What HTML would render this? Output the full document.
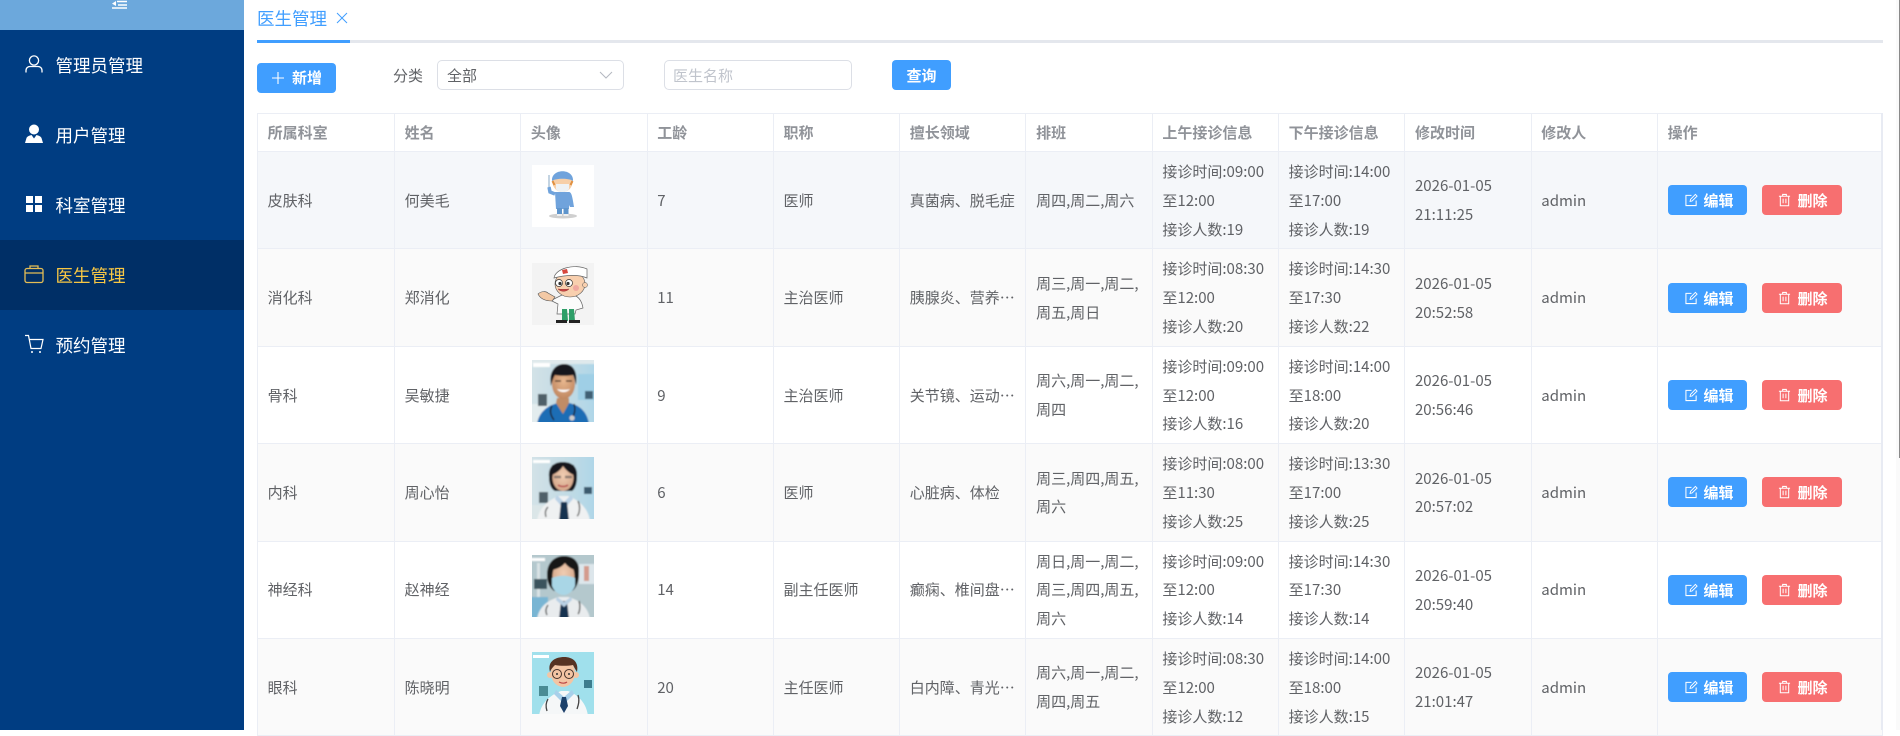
<!DOCTYPE html>
<html lang="zh"><head><meta charset="utf-8"><title>医生管理</title>
<style>
*{box-sizing:border-box}
html,body{margin:0;padding:0;width:1900px;height:730px;overflow:hidden;background:#fff;font-family:"Noto Sans CJK SC","Liberation Sans",sans-serif;color:#606266;font-size:15px}
.abs{position:absolute}
#side{position:absolute;left:0;top:0;width:244px;height:730px;background:#003d82}
#side .top{height:30px;background:#6ca8dc;position:relative}
.mi{position:absolute;left:0;width:244px;height:70px;line-height:72px;color:#fff;font-size:17.5px;padding-left:55.5px}
.mi svg{position:absolute;left:24px;top:24px}
.mi.on{background:#002f66;color:#f7c744}
#tab{position:absolute;left:257px;top:6px;font-size:17.5px;line-height:26px;color:#409eff}
#line{position:absolute;left:257px;top:40px;width:1626px;height:3px;background:#e4e7ed}
#line i{position:absolute;left:0;top:0;width:93px;height:3px;background:#409eff}
.btn{position:absolute;border-radius:4px;color:#fff;background:#409eff;text-align:center;font-weight:700;font-size:15px;line-height:30px;height:30px}
.box{position:absolute;top:60px;height:30px;border:1px solid #dcdfe6;border-radius:5px;background:#fff;line-height:30px;font-size:15px}
table{position:absolute;left:257px;top:113px;width:1625px;table-layout:fixed;border-collapse:collapse;border-top:1px solid #ebeef5;border-left:1px solid #ebeef5;background:#fff}
#rb{position:absolute;left:1881px;top:113px;width:2px;height:617px;background:#e8ebf3}
th,td{border:1px solid #ebeef5;padding:0 10px 0 9.6px;text-align:left;font-size:15px;overflow:hidden;border-top:0;border-left-color:#ebeef5}
th{height:38px;color:#909399;font-weight:700;background:#fff;line-height:20px}
td{height:97.4px;line-height:28.8px;padding-top:2px;padding-bottom:0}
tr.h td{background:#f5f7fa}
tr.s td{background:#fafafa}
tr.w td{background:#fff}
td.el{white-space:nowrap;text-overflow:ellipsis}
td svg.av{display:block;width:62px;height:62px;position:relative;top:-5px;left:1px}
.op{position:relative;padding:0}
.b{position:absolute;top:50%;margin-top:-15px;height:30px;border-radius:4px;color:#fff;font-weight:700;font-size:15px;line-height:30px}
.b svg{position:absolute;top:8px}
.b span{position:absolute;top:1px}
.e{left:10.5px;width:79px;background:#409eff}
.d{left:104.5px;width:80px;background:#f76f70}
</style></head><body>
<svg width="0" height="0" style="position:absolute"><defs>
<linearGradient id="g1" x1="0" y1="0" x2="1" y2="0"><stop offset="0" stop-color="#d3e2e7"/><stop offset=".55" stop-color="#c2dbe4"/><stop offset="1" stop-color="#aed6e8"/></linearGradient>
<radialGradient id="fc" cx=".5" cy=".4" r=".7"><stop offset="0" stop-color="#e8b78f"/><stop offset="1" stop-color="#b97f58"/></radialGradient>
<radialGradient id="ff" cx=".5" cy=".4" r=".7"><stop offset="0" stop-color="#f0cdb2"/><stop offset="1" stop-color="#cf9f82"/></radialGradient>
<filter id="bl" x="-5%" y="-5%" width="110%" height="110%"><feGaussianBlur stdDeviation=".7"/></filter>
<filter id="bs" x="-5%" y="-5%" width="110%" height="110%"><feGaussianBlur stdDeviation=".35"/></filter>
<symbol id="ed" viewBox="0 0 14 14"><path d="M12 7.5V13H1V2h6" fill="none" stroke="#fff" stroke-width="1.1"/><path d="M5.5 8.5l.5-2.2L11.2 1l1.8 1.8L7.700 8z" fill="none" stroke="#fff" stroke-width="1"/></symbol>
<symbol id="tr" viewBox="0 0 14 14"><path d="M1 3h12M5 3V1h4v2M2.500 3v10.200h9V3M5.500 5.500v5M8.500 5.500v5" fill="none" stroke="#fff" stroke-width="1.100"/></symbol>
</defs></svg>

<div id="side">
<div class="top"><svg class="abs" style="left:112px;top:0" width="16" height="10" viewBox="0 0 16 10"><path d="M5 1.500h10M6 5h9M0 8h15" stroke="#fff" stroke-width="1.600" fill="none"/><path d="M0 3.600L4 1v5z" fill="#fff"/></svg></div>
<div class="mi" style="top:30px"><svg width="20" height="20" viewBox="0 0 20 20"><circle cx="10" cy="6.500" r="4.600" fill="none" stroke="#fff" stroke-width="1.300"/><path d="M2 18.500v-2c0-2.600 2-4 4-4h8c2 0 4 1.400 4 4v2" fill="none" stroke="#fff" stroke-width="1.300"/></svg>管理员管理</div>
<div class="mi" style="top:100px"><svg width="20" height="20" viewBox="0 0 20 20"><circle cx="10" cy="5.500" r="5" fill="#fff"/><path d="M1 19l1.500-5c.5-1.500 3-2.500 5-3l2.500 3.500 2.500-3.500c2 .5 4.500 1.500 5 3l1.500 5z" fill="#fff"/></svg>用户管理</div>
<div class="mi" style="top:170px"><svg width="20" height="20" viewBox="0 0 20 20"><path d="M2 2h7v7H2zM11 2h7v7h-7zM2 11h7v7H2zM11 11h7v7h-7z" fill="#fff"/></svg>科室管理</div>
<div class="mi on" style="top:240px"><svg width="20" height="20" viewBox="0 0 20 20"><rect x="1" y="4.500" width="18" height="14" rx="2" fill="none" stroke="#e4bd55" stroke-width="1.300"/><path d="M6 4.500V2h8v2.500M1 9h18" fill="none" stroke="#e4bd55" stroke-width="1.300"/></svg>医生管理</div>
<div class="mi" style="top:310px"><svg width="20" height="20" viewBox="0 0 20 20"><path d="M1 1.500h3.500L7 14.500h10L19 5.500H5" fill="none" stroke="#fff" stroke-width="1.200"/><circle cx="8" cy="18" r="1" fill="#fff"/><circle cx="16" cy="18" r="1" fill="#fff"/></svg>预约管理</div>
</div>

<div id="tab">医生管理</div>
<svg class="abs" style="left:336px;top:12px" width="12" height="12" viewBox="0 0 12 12"><path d="M1 1l10 10M11 1L1 11" stroke="#409eff" stroke-width="1"/></svg>
<div id="line"><i></i></div>

<div class="btn" style="left:257px;top:63px;width:79px;text-align:left;padding-left:35px">新增</div>
<svg class="abs" style="left:272px;top:72px" width="12" height="12" viewBox="0 0 12 12"><path d="M6 0v12M0 6h12" stroke="#fff" stroke-width="1.100"/></svg>
<div class="abs" style="left:393px;top:64px;line-height:24px;font-size:15px">分类</div>
<div class="box" style="left:437px;width:187px;padding-left:9px">全部</div>
<svg class="abs" style="left:599px;top:71px" width="14" height="8" viewBox="0 0 14 8"><path d="M1 1l6 6 6-6" stroke="#b4b8c0" stroke-width="1" fill="none"/></svg>
<div class="box" style="left:664px;width:188px;padding-left:8px;color:#c0c4cc">医生名称</div>
<div class="btn" style="left:892px;top:60px;width:59px;line-height:32px">查询</div>

<table>
<colgroup><col style="width:137px"><col style="width:126.3px"><col style="width:126.3px"><col style="width:126.3px"><col style="width:126.3px"><col style="width:126.3px"><col style="width:126.3px"><col style="width:126.3px"><col style="width:126.3px"><col style="width:126.3px"><col style="width:126.3px"><col style="width:225px"></colgroup>
<tr><th>所属科室</th><th>姓名</th><th>头像</th><th>工龄</th><th>职称</th><th>擅长领域</th><th>排班</th><th>上午接诊信息</th><th>下午接诊信息</th><th>修改时间</th><th>修改人</th><th>操作</th></tr>

<tr class="h"><td>皮肤科</td><td>何美毛</td><td><svg class="av" viewBox="0 0 62 62"><rect width="62" height="62" fill="#fff"/><g filter="url(#bs)"><ellipse cx="31" cy="51" rx="14" ry="2.500" fill="#cfcfcf"/><path d="M17 10v12" stroke="#9db8cf" stroke-width="1.200"/><path d="M23 29l-5-2-1-5" stroke="#6fa3dc" stroke-width="3.500" fill="none"/><path d="M23 27h14c2 0 3 3 4 9l1 6-4 0-1-2 0 4H24z" fill="#6fa3dc"/><path d="M25 43h5v6h-5zM31.500 43h5v6h-5z" fill="#5e95cc"/><path d="M25 49h5v2h-5zM31.500 49h5v2h-5z" fill="#eee"/><circle cx="30.500" cy="17" r="10" fill="#f7cfa8"/><path d="M20 16C19 3 42 3 41 16c-3-3-18-3-21 0z" fill="#6fa3dc"/><path d="M20.500 16l2 4M40.500 16l-2 4" stroke="#e08f3f" stroke-width="2"/><path d="M24 19h13v5c-3 4-10 4-13 0z" fill="#eef2f5"/></g></svg></td><td>7</td><td>医师</td><td class="el">真菌病、脱毛症</td><td>周四,周二,周六</td><td>接诊时间:09:00<br>至12:00<br>接诊人数:19</td><td>接诊时间:14:00<br>至17:00<br>接诊人数:19</td><td>2026-01-05<br>21:11:25</td><td>admin</td><td class="op"><div class="b e"><svg style="left:17px" width="13" height="14"><use href="#ed"/></svg><span style="left:35px">编辑</span></div><div class="b d"><svg style="left:16px" width="13" height="14"><use href="#tr"/></svg><span style="left:35px">删除</span></div></td></tr>

<tr class="s"><td>消化科</td><td>郑消化</td><td><svg class="av" viewBox="0 0 62 62"><rect width="62" height="62" fill="#f3f3f3"/><g filter="url(#bs)"><path d="M6 31c3-3 8-3 10-1l7 4-3 4c-5 0-11-1-14-7z" fill="#f3c9a5" stroke="#555" stroke-width=".6"/><path d="M22 36l8-4h12c5 2 8 7 9 13l-7 2-1 4H25l1-10-6-3z" fill="#fbfbfb" stroke="#666" stroke-width=".7"/><path d="M30 46h5l1 12h-6zM37 46h5l1 12h-6z" fill="#2f9f68"/><path d="M24 57h11v3H24zM37 57h11v3H37z" fill="#222"/><ellipse cx="38" cy="21" rx="15" ry="13" fill="#f8cfae" stroke="#555" stroke-width=".6"/><circle cx="53" cy="22" r="2.500" fill="#f8cfae" stroke="#555" stroke-width=".5"/><path d="M22 15C23 6 42 0 55 6l0 9c-9-4-22-3-33 0z" fill="#fff" stroke="#666" stroke-width=".7"/><path d="M30 7l5-1 1 4-5 1z" fill="#d7463e"/><circle cx="27" cy="20" r="3.500" fill="#fff" stroke="#333" stroke-width=".7"/><circle cx="37" cy="20" r="3.500" fill="#fff" stroke="#333" stroke-width=".7"/><circle cx="28" cy="20.500" r="1.600" fill="#333"/><circle cx="36" cy="20.500" r="1.600" fill="#333"/><circle cx="44" cy="25" r="3" fill="#f0a9a0"/><path d="M26 26c3 3 8 3 11 0-3 .5-8 .5-11 0z" fill="#c44" stroke="#933" stroke-width=".5"/></g></svg></td><td>11</td><td>主治医师</td><td class="el">胰腺炎、营养不良、胃肠病</td><td>周三,周一,周二,<br>周五,周日</td><td>接诊时间:08:30<br>至12:00<br>接诊人数:20</td><td>接诊时间:14:30<br>至17:30<br>接诊人数:22</td><td>2026-01-05<br>20:52:58</td><td>admin</td><td class="op"><div class="b e"><svg style="left:17px" width="13" height="14"><use href="#ed"/></svg><span style="left:35px">编辑</span></div><div class="b d"><svg style="left:16px" width="13" height="14"><use href="#tr"/></svg><span style="left:35px">删除</span></div></td></tr>

<tr class="w"><td>骨科</td><td>吴敏捷</td><td><svg class="av" viewBox="0 0 62 62"><g filter="url(#bl)"><rect x="-2" y="-2" width="66" height="66" fill="url(#g1)"/><rect x="-2" y="-2" width="66" height="6" fill="#dfe9ec"/><rect x="1" y="3" width="17" height="4" fill="#fff"/><rect x="46" y="14" width="18" height="26" fill="#9fcfe6"/><rect x="53" y="31" width="8" height="8" fill="#3f6175"/><rect x="-2" y="44" width="18" height="20" fill="#e3ecee"/><rect x="6" y="34" width="9" height="12" fill="#4f5f68"/><path d="M5 64c2-13 12-19 21-21h11c10 2 18 8 20 21z" fill="#1c6db5"/><path d="M25 38h12v5l-6 11-7-11z" fill="#c08c66"/><ellipse cx="31.500" cy="24" rx="11.500" ry="15" fill="url(#fc)"/><path d="M19 26C16 10 25 4 32 4c9 0 14 7 12 21-1-5-2-8-3-10-5 1-13 1-18 0-2 3-3 7-4 11z" fill="#15171d"/><path d="M25 29c3 4 10 4 13 0-3 1-9 1-13 0z" fill="#fff"/><path d="M23 21h6M34 21h6" stroke="#2c1d15" stroke-width="1.300"/><path d="M20 46c-3 5-1 10 2 14M42 44c2 6 0 10-1 13" stroke="#1a1a1a" stroke-width="1.400" fill="none"/><circle cx="40" cy="58" r="2.600" fill="#ccc"/></g></svg></td><td>9</td><td>主治医师</td><td class="el">关节镜、运动医学、骨折</td><td>周六,周一,周二,<br>周四</td><td>接诊时间:09:00<br>至12:00<br>接诊人数:16</td><td>接诊时间:14:00<br>至18:00<br>接诊人数:20</td><td>2026-01-05<br>20:56:46</td><td>admin</td><td class="op"><div class="b e"><svg style="left:17px" width="13" height="14"><use href="#ed"/></svg><span style="left:35px">编辑</span></div><div class="b d"><svg style="left:16px" width="13" height="14"><use href="#tr"/></svg><span style="left:35px">删除</span></div></td></tr>

<tr class="s"><td>内科</td><td>周心怡</td><td><svg class="av" viewBox="0 0 62 62"><g filter="url(#bl)"><rect x="-2" y="-2" width="66" height="66" fill="url(#g1)"/><rect x="1" y="3" width="17" height="3" fill="#fff"/><rect x="52" y="30" width="8" height="7" fill="#3a5a6e"/><rect x="-2" y="48" width="16" height="16" fill="#dbe6e8"/><rect x="7" y="35" width="9" height="11" fill="#4f6069"/><path d="M5 64c2-15 14-22 22-25h9c8 3 20 10 22 25z" fill="#eff1f2"/><path d="M25 38l7 7 7-7 2 4-9 10-9-10z" fill="#bcd3e7"/><path d="M29 45h6l2 19h-10z" fill="#17304f"/><path d="M17 20C16 8 24 5 31 5c8 0 15 4 14 15 0 7-2 12-5 14H23c-4-2-6-7-6-14z" fill="#17161a"/><ellipse cx="31" cy="21" rx="10.500" ry="13" fill="url(#ff)"/><path d="M20 18c4-2 8-4 11-9 3 4 6 7 11 9V8H20z" fill="#17161a"/><path d="M22 20h7M33 20h7" stroke="#8d7a70" stroke-width="2.500"/><path d="M26 28c3 2 7 2 10 0" stroke="#b6484d" stroke-width="1.600" fill="none"/><path d="M16 50c-3 3-3 6-2 10M46 44c3 6 1 14-1 15" stroke="#6a6a6a" stroke-width="1.400" fill="none"/></g></svg></td><td>6</td><td>医师</td><td class="el">心脏病、体检</td><td>周三,周四,周五,<br>周六</td><td>接诊时间:08:00<br>至11:30<br>接诊人数:25</td><td>接诊时间:13:30<br>至17:00<br>接诊人数:25</td><td>2026-01-05<br>20:57:02</td><td>admin</td><td class="op"><div class="b e"><svg style="left:17px" width="13" height="14"><use href="#ed"/></svg><span style="left:35px">编辑</span></div><div class="b d"><svg style="left:16px" width="13" height="14"><use href="#tr"/></svg><span style="left:35px">删除</span></div></td></tr>

<tr class="w"><td>神经科</td><td>赵神经</td><td><svg class="av" viewBox="0 0 62 62"><g filter="url(#bl)"><rect x="-2" y="-2" width="66" height="66" fill="#b4c8cd"/><rect x="-1" y="3" width="14" height="3" fill="#fff"/><rect x="5" y="8" width="3" height="36" fill="#d9e3e5"/><rect x="2" y="24" width="13" height="10" fill="#3a525d"/><rect x="47" y="9" width="17" height="20" fill="#dde6eb"/><rect x="52" y="11" width="5" height="15" fill="#d49b8d"/><rect x="-2" y="42" width="18" height="22" fill="#79b5d3"/><path d="M5 64c2-14 14-20 22-22h9c8 2 20 8 22 22z" fill="#e9ecee"/><path d="M29 46h6l2 18h-10z" fill="#17304f"/><path d="M25 42l7 5 7-5 1 3-8 7-8-7z" fill="#b9d0e4"/><path d="M15 20C15 6 24 1 32 1c9 0 16 5 15 17 0 8-2 15-7 18H22c-4-3-7-8-7-16z" fill="#181719"/><ellipse cx="31.500" cy="21" rx="11" ry="15" fill="url(#ff)"/><path d="M20 15c5-1 10-3 13-7 2 3 6 6 10 7V6H20z" fill="#181719"/><path d="M20 23c7-3 16-3 23 0v8c-2 6-8 9-11 9-4 0-10-3-12-9z" fill="#a9d6e6"/><path d="M16 50c-3 4-2 8-1 10M47 46c2 6 0 12-1 13" stroke="#555" stroke-width="1.400" fill="none"/></g></svg></td><td>14</td><td>副主任医师</td><td class="el">癫痫、椎间盘突出、头痛</td><td>周日,周一,周二,<br>周三,周四,周五,<br>周六</td><td>接诊时间:09:00<br>至12:00<br>接诊人数:14</td><td>接诊时间:14:30<br>至17:30<br>接诊人数:14</td><td>2026-01-05<br>20:59:40</td><td>admin</td><td class="op"><div class="b e"><svg style="left:17px" width="13" height="14"><use href="#ed"/></svg><span style="left:35px">编辑</span></div><div class="b d"><svg style="left:16px" width="13" height="14"><use href="#tr"/></svg><span style="left:35px">删除</span></div></td></tr>

<tr class="s"><td>眼科</td><td>陈晓明</td><td><svg class="av" viewBox="0 0 62 62"><g filter="url(#bs)"><rect x="-2" y="-2" width="66" height="66" fill="#a0e0ec"/><rect x="1" y="3" width="16" height="3" fill="#fff"/><rect x="52" y="28" width="8" height="8" fill="#3c7d8e"/><rect x="7" y="34" width="9" height="10" fill="#4a8b94"/><path d="M7 64c2-15 14-22 22-25h7c8 3 18 10 20 25z" fill="#f5f7f8"/><path d="M24 38l8 7 8-7 2 4-10 10-10-10z" fill="#a8d0ea"/><path d="M30 45h4l2 9-4 7-4-7z" fill="#1e3f6b"/><ellipse cx="31" cy="21" rx="12" ry="14" fill="#f3c5a4"/><circle cx="18" cy="23" r="3" fill="#f3c5a4"/><circle cx="44" cy="23" r="3" fill="#f3c5a4"/><path d="M18 20C15 9 24 5 32 5c9 0 15 5 13 15-2-3-3-5-4-7-5 1-13 1-18 0-2 2-4 4-5 7z" fill="#573024"/><circle cx="25" cy="22" r="4.500" fill="none" stroke="#453029" stroke-width="1"/><circle cx="37" cy="22" r="4.500" fill="none" stroke="#453029" stroke-width="1"/><circle cx="25" cy="22" r="1" fill="#333"/><circle cx="37" cy="22" r="1" fill="#333"/><path d="M27 30c3 1.500 6 1.500 8 0" stroke="#b44" stroke-width="1.200" fill="none"/><path d="M16 47c-3 5-2 9-1 12M46 43c2 6 0 11-1 14" stroke="#444" stroke-width="1.300" fill="none"/></g></svg></td><td>20</td><td>主任医师</td><td class="el">白内障、青光眼、近视矫正</td><td>周六,周一,周二,<br>周四,周五</td><td>接诊时间:08:30<br>至12:00<br>接诊人数:12</td><td>接诊时间:14:00<br>至18:00<br>接诊人数:15</td><td>2026-01-05<br>21:01:47</td><td>admin</td><td class="op"><div class="b e"><svg style="left:17px" width="13" height="14"><use href="#ed"/></svg><span style="left:35px">编辑</span></div><div class="b d"><svg style="left:16px" width="13" height="14"><use href="#tr"/></svg><span style="left:35px">删除</span></div></td></tr>
</table>
<div id="rb"></div>
<div class="abs" style="left:1896px;top:0;width:4px;height:730px;background:#fafafa"></div>
<div class="abs" style="left:1899px;top:0;width:1px;height:458px;background:#8a8a8a"></div>
</body></html>
